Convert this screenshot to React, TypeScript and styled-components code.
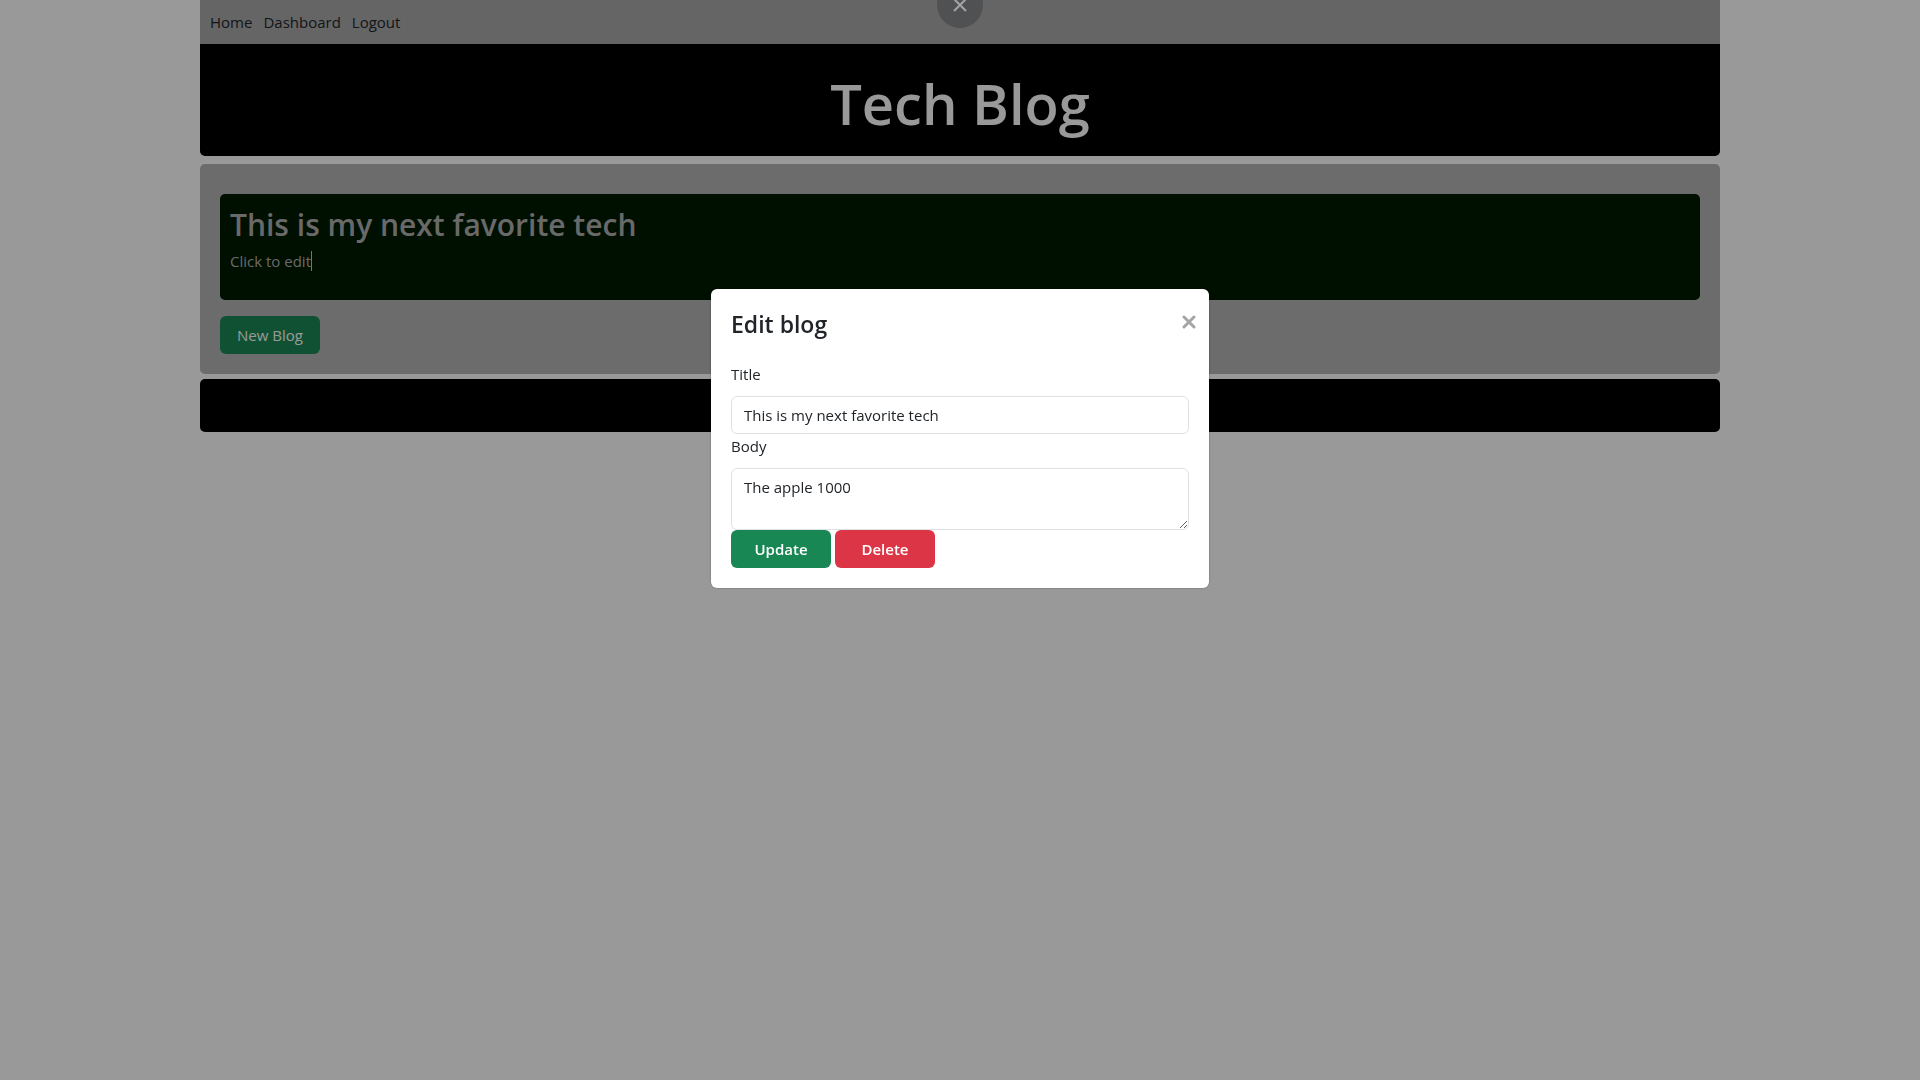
import React from "react";
import styled, { createGlobalStyle } from "styled-components";

const GlobalStyle = createGlobalStyle`
  *, *::before, *::after { box-sizing: border-box; }
  body {
    margin: 0;
    background: #fff;
    color: #212529;
    font-family: "Open Sans", "Noto Sans", sans-serif;
    font-size: 15px;
    line-height: 24px;
  }
  h1, h2, p { margin: 0; }
  button, input, textarea { font: inherit; }
`;

const Page = styled.div`
  margin: 0 200px;
`;

const Nav = styled.nav`
  display: flex;
  gap: 11px;
  padding: 10px;
  background: #a9a9a9;
`;

const NavLink = styled.a`
  color: #212529;
  text-decoration: none;
`;

const Header = styled.header`
  padding: 23px 20px 17px;
  background: #000;
  border-radius: 0 0 5px 5px;
  text-align: center;
`;

const SiteTitle = styled.h1`
  color: #fff;
  font-size: 56px;
  font-weight: 600;
  line-height: 72px;
`;

const Main = styled.main`
  margin-top: 8px;
  padding: 30px 20px 20px;
  background: #b4b4b4;
  border-radius: 5px;
`;

const Card = styled.article`
  margin-bottom: 16px;
  padding: 11px 10px 24px;
  background: #001b00;
  border-radius: 5px;
  color: #b0b0b0;
`;

const CardTitle = styled.h2`
  margin-bottom: 6px;
  font-size: 30px;
  font-weight: 600;
  line-height: 40px;
`;

const EditHint = styled.span`
  display: block;
  width: fit-content;
  border-right: 1px solid #c4c4c4;
  line-height: 20px;
  margin-bottom: 5px;
`;

const Button = styled.button<{ $tone: string; $weight?: number }>`
  width: 100px;
  height: 38px;
  padding: 0;
  border: 0;
  border-radius: 6px;
  background: ${(p) => p.$tone};
  color: #fff;
  font-weight: ${(p) => p.$weight ?? 400};
  cursor: pointer;
`;

const Footer = styled.footer`
  height: 53px;
  margin-top: 5px;
  background: #000;
  border-radius: 5px;
`;

const Overlay = styled.div`
  position: fixed;
  inset: 0;
  display: flex;
  justify-content: center;
  align-items: flex-start;
  padding-top: 289px;
  background: rgba(0, 0, 0, 0.4);
`;

const ScreenClose = styled.button`
  position: absolute;
  top: -18px;
  left: 50%;
  width: 46px;
  height: 46px;
  margin-left: -23px;
  padding: 0;
  border: 0;
  border-radius: 50%;
  background: #4f5153;
  display: grid;
  place-items: center;
`;

const Dialog = styled.div`
  position: relative;
  width: 498px;
  padding: 20px;
  background: #fff;
  border-radius: 6px;
  box-shadow: 0 0 2px rgba(0, 0, 0, 0.4);
`;

const DialogTitle = styled.h2`
  margin-bottom: 23px;
  font-size: 23px;
  font-weight: 600;
  line-height: 30px;
`;

const DialogClose = styled.button`
  position: absolute;
  top: 23px;
  right: 10px;
  width: 20px;
  height: 20px;
  padding: 0;
  border: 0;
  background: none;
  display: grid;
  place-items: center;
  cursor: pointer;
`;

const Label = styled.label`
  display: block;
  padding-bottom: 10px;
  line-height: 24px;
`;

const Input = styled.input`
  display: block;
  width: 100%;
  height: 38px;
  padding: 6px 12px;
  border: 1px solid #dee2e6;
  border-radius: 6px;
  background: #fff;
  color: #212529;
  outline: 0;
`;

const TextArea = styled.textarea`
  display: block;
  width: 100%;
  height: 62px;
  padding: 6px 12px;
  border: 1px solid #dee2e6;
  border-radius: 6px;
  background: #fff;
  color: #212529;
  outline: 0;
  resize: vertical;
`;

const Actions = styled.div`
  display: flex;
  gap: 4px;
`;

export default function App() {
  return (
    <>
      <GlobalStyle />
      <Page>
        <Nav>
          <NavLink href="#home">Home</NavLink>
          <NavLink href="#dashboard">Dashboard</NavLink>
          <NavLink href="#logout">Logout</NavLink>
        </Nav>
        <Header>
          <SiteTitle>Tech Blog</SiteTitle>
        </Header>
        <Main>
          <Card>
            <CardTitle>This is my next favorite tech</CardTitle>
            <EditHint>Click to edit</EditHint>
          </Card>
          <Button type="button" $tone="#198754">New Blog</Button>
        </Main>
        <Footer />
      </Page>
      <Overlay>
        <ScreenClose type="button" aria-label="Close overlay">
          <svg width="14" height="14" viewBox="0 0 14 14" fill="none" stroke="#a3a4a5" strokeWidth="2">
            <path d="M1 1l12 12M13 1L1 13" />
          </svg>
        </ScreenClose>
        <Dialog role="dialog" aria-labelledby="dialog-title">
          <DialogTitle id="dialog-title">Edit blog</DialogTitle>
          <DialogClose type="button" aria-label="Close">
            <svg width="14" height="14" viewBox="0 0 14 14" fill="none" stroke="#a5a5a5" strokeWidth="3" strokeLinecap="round">
              <path d="M2 2l10 10M12 2L2 12" />
            </svg>
          </DialogClose>
          <form>
            <Label htmlFor="blog-title">Title</Label>
            <Input id="blog-title" defaultValue="This is my next favorite tech" />
            <Label htmlFor="blog-body">Body</Label>
            <TextArea id="blog-body" defaultValue="The apple 1000" />
            <Actions>
              <Button type="button" $tone="#198754" $weight={600}>Update</Button>
              <Button type="button" $tone="#dc3545" $weight={600}>Delete</Button>
            </Actions>
          </form>
        </Dialog>
      </Overlay>
    </>
  );
}
